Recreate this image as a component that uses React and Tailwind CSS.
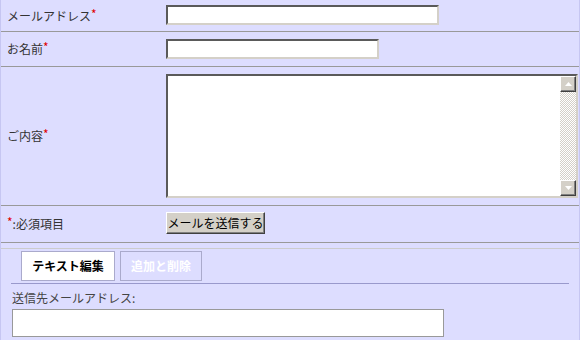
import React from 'react';

const Req = () => <span className="relative top-[-2px] text-[12px] leading-none text-[#e00000]">*</span>;

const insetBox =
  'border-2 border-t-[#5a5a5a] border-l-[#5a5a5a] border-b-[#d4d0c8] border-r-[#d4d0c8] bg-white';

const ScrollArrow = ({ up }) => (
  <div className="flex h-4 w-4 items-center justify-center border border-t-white border-l-white border-b-[#404040] border-r-[#404040] bg-[#d4d0c8] shadow-[inset_-1px_-1px_#808080]">
    <svg width="7" height="4" viewBox="0 0 7 4">
      {up ? <path d="M3.5 0 L7 4 L0 4 Z" fill="#fff" /> : <path d="M0 0 L7 0 L3.5 4 Z" fill="#fff" />}
    </svg>
  </div>
);

const App = () => {
  return (
    <div
      className="h-[340px] w-[580px] overflow-hidden border-x border-[#c6c6f2] bg-[#ddddff] text-[12px] text-[#333]"
      style={{ fontFamily: '"Noto Sans CJK JP", "Noto Sans", sans-serif' }}
    >
      <div className="grid grid-cols-[165px_1fr]">
        <div className="flex h-[32px] items-center pl-[6px] border-b border-[#999]">
          メールアドレス<Req />
        </div>
        <div className="h-[32px] pt-[5px] border-b border-[#999]">
          <div className={`h-[20px] w-[273px] ${insetBox}`} />
        </div>

        <div className="flex h-[35px] items-center pl-[6px] border-b border-[#999]">
          お名前<Req />
        </div>
        <div className="h-[35px] pt-[7px] border-b border-[#999]">
          <div className={`h-[20px] w-[213px] ${insetBox}`} />
        </div>

        <div className="flex h-[139px] items-center pl-[6px] border-b border-[#999]">
          ご内容<Req />
        </div>
        <div className="h-[139px] pt-[7px] border-b border-[#999]">
          <div className={`flex h-[124px] w-[412px] ${insetBox}`}>
            <div className="flex-1" />
            <div className="flex w-4 flex-col bg-[repeating-conic-gradient(#d4d0c8_0_25%,#ffffff_0_50%)] bg-[length:2px_2px]">
              <ScrollArrow up />
              <div className="flex-1" />
              <ScrollArrow />
            </div>
          </div>
        </div>

        <div className="flex h-[37px] items-center pl-[6px] border-b border-[#999]">
          <Req />:必須項目
        </div>
        <div className="h-[37px] pt-[6px] border-b border-[#999]">
          <button className="h-[22px] w-[99px] border border-t-white border-l-white border-b-[#404040] border-r-[#404040] bg-[#d4d0c8] text-[12px] leading-none text-black shadow-[inset_-1px_-1px_#808080]">
            メールを送信する
          </button>
        </div>
      </div>

      <div className="mt-[5px] border-t border-[#cccccc] pt-[2px]">
        <div className="mx-[10px] flex gap-[5px] border-b border-[#9999cc] pb-[2px] pl-[10px] pr-[10px]">
          <div className="flex h-[30px] w-[94px] items-center justify-center border border-[#aaaacc] bg-white font-bold text-black">
            テキスト編集
          </div>
          <div className="flex h-[30px] w-[82px] items-center justify-center border border-[#aaaacc] font-bold text-white">
            追加と削除
          </div>
        </div>
        <div className="px-[11px] pt-[5px]">
          <div className="leading-[18px] text-[#444]">送信先メールアドレス:</div>
          <div className="mt-[2px] h-[28px] w-[432px] border border-[#999] bg-white" />
        </div>
      </div>
    </div>
  );
};

export default App;
